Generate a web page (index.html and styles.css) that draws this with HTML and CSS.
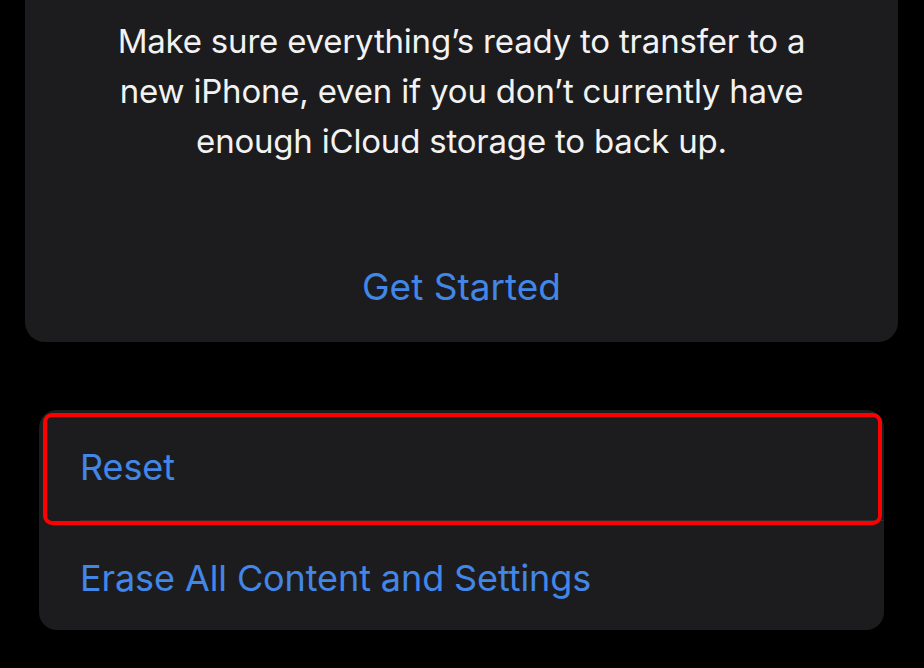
FILE: index.html
```html
<!DOCTYPE html>
<html lang="en">
<head>
<meta charset="UTF-8">
<meta name="viewport" content="width=device-width, initial-scale=1.0">
<title>Transfer or Reset iPhone</title>
<link rel="stylesheet" href="styles.css">
</head>
<body>

<div class="prepare-card">
    <p class="prepare-text">Make sure everything’s ready to transfer to a new iPhone, even if you don’t currently have enough iCloud storage to back up.</p>
    <div class="get-started">Get Started</div>
</div>

<div class="reset-card">
    <div class="reset-row">Reset</div>
    <div class="row-divider"></div>
    <div class="reset-row">Erase All Content and Settings</div>
    <div class="highlight-box"></div>
</div>

</body>
</html>
```

FILE: styles.css
```css
body {
    margin: 0;
    padding: 0;
    background-color: #000;
    font-family: Inter, "Noto Sans", sans-serif;
    width: 924px;
    height: 668px;
    overflow: hidden;
}
.prepare-card {
    margin-left: 25px;
    width: 873px;
    height: 342px;
    box-sizing: border-box;
    padding-top: 16px;
    background-color: #1c1c1e;
    border-radius: 0 0 20px 20px;
    display: flex;
    flex-direction: column;
    align-items: center;
}
.prepare-text {
    margin: 0;
    width: 720px;
    font-size: 33px;
    line-height: 50px;
    letter-spacing: -0.2px;
    color: #f2f2f2;
    text-align: center;
}
.get-started {
    margin-top: 96px;
    font-size: 37px;
    line-height: 50px;
    color: #4287e8;
}
.reset-card {
    position: relative;
    margin-top: 68px;
    margin-left: 39px;
    width: 845px;
    height: 220px;
    background-color: #1c1c1e;
    border-radius: 18px;
    display: flex;
    flex-direction: column;
}
.reset-row {
    flex: 1;
    display: flex;
    align-items: center;
    padding-left: 41px;
    padding-top: 5px;
    font-size: 36px;
    letter-spacing: -0.1px;
    color: #4287e8;
}
.row-divider {
    height: 1px;
    margin-left: 41px;
    background-color: #2e2e31;
}
.highlight-box {
    position: absolute;
    left: 4px;
    top: 3px;
    width: 839px;
    height: 112px;
    box-sizing: border-box;
    border: 4px solid #ff0000;
    border-radius: 9px;
}
```
